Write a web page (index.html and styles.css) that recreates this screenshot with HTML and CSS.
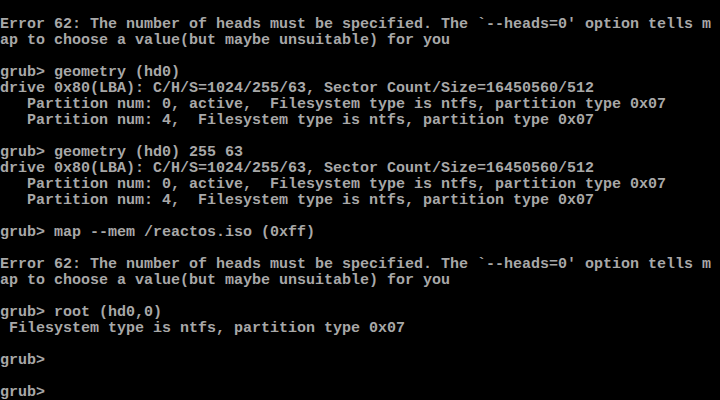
FILE: index.html
```html
<!DOCTYPE html>
<html>
<head>
<meta charset="utf-8">
<link rel="stylesheet" href="styles.css">
</head>
<body>
<pre class="screen">

Error 62: The number of heads must be specified. The `--heads=0' option tells m
ap to choose a value(but maybe unsuitable) for you

grub&gt; geometry (hd0)
drive 0x80(LBA): C/H/S=1024/255/63, Sector Count/Size=16450560/512
   Partition num: 0, active,  Filesystem type is ntfs, partition type 0x07
   Partition num: 4,  Filesystem type is ntfs, partition type 0x07

grub&gt; geometry (hd0) 255 63
drive 0x80(LBA): C/H/S=1024/255/63, Sector Count/Size=16450560/512
   Partition num: 0, active,  Filesystem type is ntfs, partition type 0x07
   Partition num: 4,  Filesystem type is ntfs, partition type 0x07

grub&gt; map --mem /reactos.iso (0xff)

Error 62: The number of heads must be specified. The `--heads=0' option tells m
ap to choose a value(but maybe unsuitable) for you

grub&gt; root (hd0,0)
 Filesystem type is ntfs, partition type 0x07

grub&gt;

grub&gt;</pre>
</body>
</html>
```
FILE: styles.css
```css
html, body {
  margin: 0;
  padding: 0;
  background: #000;
  width: 720px;
  height: 400px;
  overflow: hidden;
}
.screen {
  margin: 0;
  padding: 1px 0 0 0;
  font-family: "Liberation Mono", "DejaVu Sans Mono", monospace;
  font-size: 15px;
  line-height: 16px;
  font-weight: bold;
  color: #a8a8a8;
  white-space: pre;
}
```
